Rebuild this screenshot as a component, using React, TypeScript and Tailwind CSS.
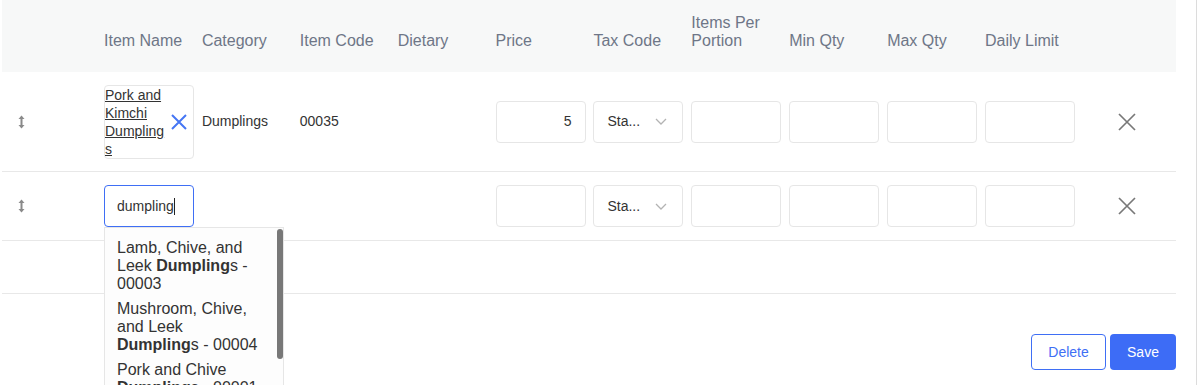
import React from "react";

const cols = "grid grid-cols-[102px_repeat(10,97.9px)_91px]";

function DragIcon() {
  return (
    <svg width="7" height="14" viewBox="0 0 7 14" className="block">
      <path d="M3.5 0.5L6.5 4H0.5Z" fill="#8a8a8a" />
      <rect x="2.5" y="3.5" width="2" height="7" fill="#8a8a8a" />
      <path d="M3.5 13.5L6.5 10H0.5Z" fill="#8a8a8a" />
    </svg>
  );
}

function CloseIcon() {
  return (
    <svg width="20" height="20" viewBox="0 0 20 20" className="block">
      <path d="M2 2L18 18M18 2L2 18" stroke="#787878" strokeWidth="1.7" fill="none" />
    </svg>
  );
}

function BlueX() {
  return (
    <svg width="18" height="18" viewBox="0 0 18 18" className="block">
      <path d="M2 2L16 16M16 2L2 16" stroke="#4676f4" strokeWidth="2" fill="none" />
    </svg>
  );
}

function Chevron() {
  return (
    <svg width="12" height="7" viewBox="0 0 12 7" className="block">
      <path d="M1 1L6 6L11 1" stroke="#b3b3b3" strokeWidth="1.3" fill="none" />
    </svg>
  );
}

function Box({ children, className = "" }: { children?: React.ReactNode; className?: string }) {
  return (
    <div className={`w-[90px] h-[42px] border border-[#e6e6e6] rounded-[4px] bg-white flex items-center ${className}`}>
      {children}
    </div>
  );
}

function Select() {
  return (
    <Box className="pl-[13px] pr-[15px] justify-between">
      <span className="text-[14px] text-[#333]">Sta...</span>
      <Chevron />
    </Box>
  );
}

const headers = [
  "Item Name",
  "Category",
  "Item Code",
  "Dietary",
  "Price",
  "Tax Code",
  "Items Per Portion",
  "Min Qty",
  "Max Qty",
  "Daily Limit",
];

function Bold({ children }: { children: React.ReactNode }) {
  return <b className="font-bold">{children}</b>;
}

export default function App() {
  return (
    <div
      className="w-[1197px] h-[385px] bg-white overflow-hidden border-r border-[#dcdcdc] relative"
      style={{ fontFamily: '"Liberation Sans", Arial, sans-serif' }}
    >
      <div className="ml-[2px] w-[1174px]">
        {/* Header */}
        <div className={`${cols} h-[72px] bg-[#f7f8f8] items-end pb-[22px]`}>
          <div />
          {headers.map((h) => (
            <div key={h} className="text-[16px] leading-[18px] text-[#6e7687] pr-[8px]">
              {h}
            </div>
          ))}
          <div />
        </div>

        {/* Row 1 */}
        <div className={`${cols} h-[100px] border-b border-[#e8e8e8] items-center`}>
          <div className="pl-[16px]">
            <DragIcon />
          </div>
          <div>
            <div className="w-[90px] h-[74px] border border-[#e6e6e6] rounded-[4px] flex items-center pr-[6px]">
              <span className="w-[62px] text-[14px] leading-[18px] text-[#333] underline break-words">
                Pork and Kimchi Dumplings
              </span>
              <span className="ml-[3px]">
                <BlueX />
              </span>
            </div>
          </div>
          <div className="text-[14px] text-[#333]">Dumplings</div>
          <div className="text-[14px] text-[#333]">00035</div>
          <div />
          <div>
            <Box className="justify-end pr-[13px]">
              <span className="text-[14px] text-[#333]">5</span>
            </Box>
          </div>
          <div>
            <Select />
          </div>
          <div>
            <Box />
          </div>
          <div>
            <Box />
          </div>
          <div>
            <Box />
          </div>
          <div>
            <Box />
          </div>
          <div className="flex justify-center pr-[2px]">
            <CloseIcon />
          </div>
        </div>

        {/* Row 2 */}
        <div className={`${cols} h-[69px] border-b border-[#e8e8e8] items-center relative z-10`}>
          <div className="pl-[16px]">
            <DragIcon />
          </div>
          <div className="relative">
            <div className="w-[90px] h-[42px] border border-[#3f6ff5] rounded-[4px] bg-white flex items-center pl-[12px]">
              <span className="text-[14px] text-[#333]">dumpling</span>
              <span className="w-[1px] h-[17px] bg-[#222]" />
            </div>
            <div className="absolute left-0 top-[42px] w-[180px] h-[170px] bg-[#fdfdfd] border border-[#e6e6e6] overflow-hidden">
              <div className="pt-[7px] pl-[12px] pr-[20px] text-[16px] leading-[18px] text-[#333]">
                <div className="py-[3.5px]">
                  Lamb, Chive, and Leek <Bold>Dumpling</Bold>s - 00003
                </div>
                <div className="py-[3.5px]">
                  Mushroom, Chive, and Leek <Bold>Dumpling</Bold>s - 00004
                </div>
                <div className="py-[3.5px]">
                  Pork and Chive <Bold>Dumpling</Bold>s - 00001
                </div>
              </div>
              <div className="absolute right-[0px] top-[1px] w-[6px] h-[130px] rounded-full bg-[#787878]" />
            </div>
          </div>
          <div />
          <div />
          <div />
          <div>
            <Box />
          </div>
          <div>
            <Select />
          </div>
          <div>
            <Box />
          </div>
          <div>
            <Box />
          </div>
          <div>
            <Box />
          </div>
          <div>
            <Box />
          </div>
          <div className="flex justify-center pr-[2px]">
            <CloseIcon />
          </div>
        </div>

        {/* Row 3 (empty) */}
        <div className="h-[53px] border-b border-[#e8e8e8]" />

        {/* Buttons */}
        <div className="mt-[40px] flex justify-end gap-[4px]">
          <button className="h-[36px] w-[75px] border border-[#3f6ff5] rounded-[4px] bg-white text-[14px] text-[#3f6ff5]">
            Delete
          </button>
          <button className="h-[36px] w-[66px] rounded-[4px] bg-[#3d6cf6] text-[14px] text-white">
            Save
          </button>
        </div>
      </div>
    </div>
  );
}
